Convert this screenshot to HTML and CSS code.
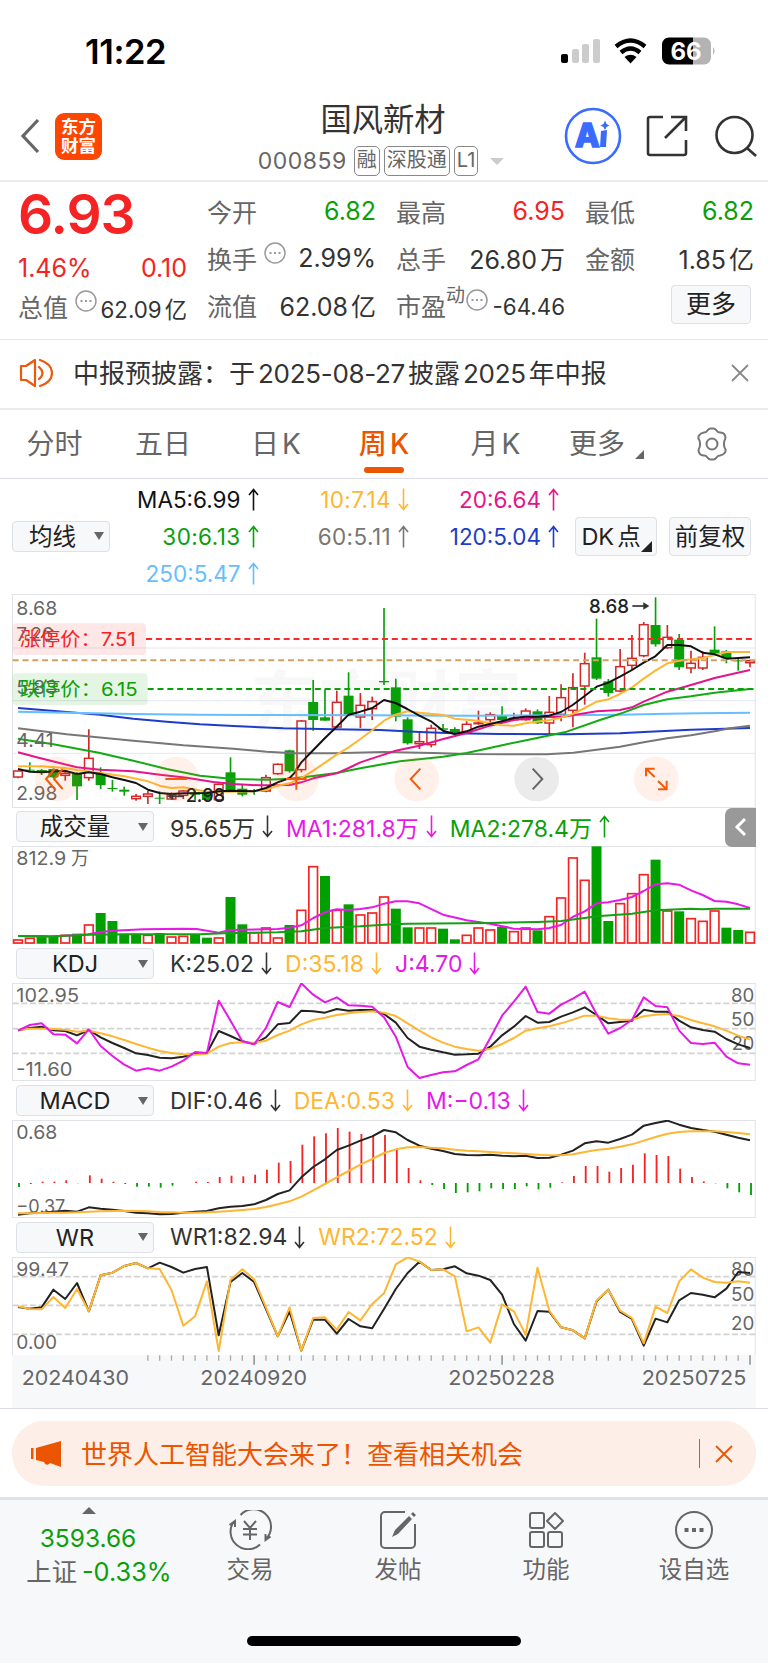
FILE: index.html
```html
<!DOCTYPE html>
<html lang="zh-CN">
<head>
    <meta charset="UTF-8">
    <meta name="viewport" content="width=device-width, initial-scale=1.0">
    <title>国风新材 000859</title>
    <link rel="stylesheet" href="styles.css">
</head>
<body>
    <svg class="defs">
        <symbol id="up" viewBox="0 0 11 23"><path d="M5.500 22.500V1.500M1 7l4.500-5.500L10 7"/></symbol>
        <symbol id="down" viewBox="0 0 11 23"><path d="M5.500 .5v21M1 16l4.500 5.500L10 16"/></symbol>
        <symbol id="dots" viewBox="0 0 22 22"><circle cx="11" cy="11" r="10"/><path d="M5.500 11h2M10 11h2M14.500 11h2" stroke-width="2"/></symbol>
    </svg>

    <div class="status">
        <span class="time">11:22</span>
        <svg class="status-icons" width="156" height="30" viewBox="0 0 156 30">
            <rect x="1" y="17" width="7" height="9" rx="2"/>
            <g fill="#ccc">
                <rect x="12" y="12" width="7" height="14" rx="2"/>
                <rect x="22" y="7" width="7" height="19" rx="2"/>
                <rect x="33" y="2" width="7" height="24" rx="2"/>
            </g>
            <g fill="none" stroke="#000" stroke-width="4.400">
                <path d="M56 9.500q14.500-12 29 0"/>
                <path d="M61 15.500q9.500-8 19 0"/>
            </g>
            <path d="M64.500 20q6-4.500 12 0l-6 6.500z"/>
            <path d="M109 .5h24v27h-24a7 7 0 0 1-7-7v-13a7 7 0 0 1 7-7z"/>
            <path fill="#b3b3b3" d="M133 .5h11a7 7 0 0 1 7 7v13a7 7 0 0 1-7 7h-11zM153 10q3 4 0 8z"/>
            <text x="126" y="22.500" class="battery">66</text>
        </svg>
    </div>

    <header class="header">
        <div class="header-left">
            <svg width="22" height="36" viewBox="0 0 22 36"><path d="M19 2L4 18l15 16" fill="none" stroke="#666" stroke-width="3.200"/></svg>
            <div class="logo">东方<br>财富</div>
        </div>
        <div class="title">
            <h1>国风新材</h1>
            <div class="code">000859<span class="tag">融</span><span class="tag">深股通</span><span class="tag">L1</span><i class="caret"></i></div>
        </div>
        <div class="header-right">
            <svg width="58" height="58" viewBox="0 0 58 58">
                <circle cx="29" cy="29" r="27" fill="none" stroke="#3a6bff" stroke-width="2.600"/>
                <text x="11" y="40" class="ai">A</text>
                <path d="M37 24l6-1-1 17h-6zM41 13.500l1.500 3.500 3 1.500-3 1.500-1.500 3-1.500-3-3-1.500 3-1.500z" fill="#3a6bff"/>
            </svg>
            <svg width="42" height="42" viewBox="0 0 42 42" fill="none" stroke="#333" stroke-width="2.600">
                <path d="M17 2H4a2 2 0 0 0-2 2v34a2 2 0 0 0 2 2h34a2 2 0 0 0 2-2V25M25 2h15v14M39 3L19 23"/>
            </svg>
            <svg width="42" height="44" viewBox="0 0 42 44" fill="none" stroke="#333" stroke-width="2.600">
                <circle cx="19.500" cy="21" r="18"/><path d="M32 34l9 8"/>
            </svg>
        </div>
    </header>

    <section class="quote">
        <div class="price-col">
            <div class="price red">6.93</div>
            <div class="row"><span class="red">1.46%</span><span class="red">0.10</span></div>
            <div class="row small"><label>总值<svg class="dots"><use href="#dots"/></svg></label><span>62.09<em>亿</em></span></div>
        </div>
        <div class="col">
            <div class="row"><label>今开</label><span class="green">6.82</span></div>
            <div class="row"><label>换手<svg class="dots"><use href="#dots"/></svg></label><span>2.99%</span></div>
            <div class="row"><label>流值</label><span>62.08<em>亿</em></span></div>
        </div>
        <div class="col">
            <div class="row"><label>最高</label><span class="red">6.95</span></div>
            <div class="row"><label>总手</label><span>26.80<em>万</em></span></div>
            <div class="row small"><label>市盈<sup>动</sup><svg class="dots tight"><use href="#dots"/></svg></label><span>-64.46</span></div>
        </div>
        <div class="col">
            <div class="row"><label>最低</label><span class="green">6.82</span></div>
            <div class="row"><label>金额</label><span>1.85<em>亿</em></span></div>
            <div class="row end"><button class="btn more">更多</button></div>
        </div>
    </section>

    <section class="notice">
        <svg width="34" height="30" viewBox="0 0 34 30" fill="none" stroke="#eb5a0a" stroke-width="2.200">
            <path d="M2 8v14h5l9 6V2L7 8z" stroke-linejoin="round"/><path d="M20 9q7 6 0 12M21 2q12 4 12 13t-12 13" stroke-linecap="round"/>
        </svg>
        <p>中报预披露：于<b>2025-08-27</b>披露<b>2025</b>年中报</p>
        <svg width="18" height="18" viewBox="0 0 18 18"><path d="M1 1l16 16M17 1L1 17" stroke="#888" stroke-width="1.800"/></svg>
    </section>

    <nav class="tabs">
        <span>分时</span>
        <span>五日</span>
        <span>日<b>K</b></span>
        <span class="active">周<b>K</b></span>
        <span>月<b>K</b></span>
        <span class="tab-more">更多<i class="corner"></i></span>
        <span><svg width="34" height="34" viewBox="0 0 34 34" fill="none" stroke="#777" stroke-width="2">
            <path d="M12 4q2-3 4-2.500h2Q20 1 22 4q1 1.500 3 1.500 4 0 5 3t-.5 5q-1 3.500 0 7 2 2.500.5 5t-5 3q-2 0-3 1.500-2 3-4 2.500h-2q-2 .5-4-2.500-1-1.500-3-1.500-4 0-5-3t.5-5q1-3.500 0-7-2-2.500-.5-5t5-3q2 0 3-1.500z"/><circle cx="17" cy="17" r="5.500"/></svg></span>
    </nav>

    <section class="ma">
        <button class="btn select">均线<i class="caret dark"></i></button>
        <div class="ma-grid">
            <span class="c-ma5">MA5:6.99<svg class="arrow"><use href="#up"/></svg></span>
            <span class="c-yellow wide">10:7.14<svg class="arrow"><use href="#down"/></svg></span>
            <span class="c-pink">20:6.64<svg class="arrow"><use href="#up"/></svg></span>
            <span class="green wide">30:6.13<svg class="arrow"><use href="#up"/></svg></span>
            <span class="c-gray wide">60:5.11<svg class="arrow"><use href="#up"/></svg></span>
            <span class="c-blue">120:5.04<svg class="arrow"><use href="#up"/></svg></span>
            <span class="c-sky">250:5.47<svg class="arrow"><use href="#up"/></svg></span>
        </div>
        <button class="btn dk">DK<em>点</em><i class="corner"></i></button>
        <button class="btn">前复权</button>
    </section>

    <section class="charts">
        <svg id="kline" width="744" height="214" viewBox="36 10 2232 642"></svg>

        <div class="legend">
            <button class="btn select">成交量<i class="caret dark"></i></button>
            <span>95.65万<svg class="arrow"><use href="#down"/></svg></span>
            <span class="c-magenta">MA1:281.8万<svg class="arrow"><use href="#down"/></svg></span>
            <span class="green">MA2:278.4万<svg class="arrow"><use href="#up"/></svg></span>
            <div class="drawer"><svg width="14" height="20" viewBox="0 0 14 20"><path d="M11 2L3 10l8 8" fill="none" stroke="#fff" stroke-width="3"/></svg></div>
        </div>
        <svg id="volume" width="744" height="98" viewBox="36 137 2232 294"></svg>

        <div class="legend">
            <button class="btn select">KDJ<i class="caret dark"></i></button>
            <span>K:25.02<svg class="arrow"><use href="#down"/></svg></span>
            <span class="c-yellow">D:35.18<svg class="arrow"><use href="#down"/></svg></span>
            <span class="c-magenta">J:4.70<svg class="arrow"><use href="#down"/></svg></span>
        </div>
        <svg id="kdj" width="744" height="98" viewBox="36 547 2232 294"></svg>

        <div class="legend">
            <button class="btn select">MACD<i class="caret dark"></i></button>
            <span>DIF:0.46<svg class="arrow"><use href="#down"/></svg></span>
            <span class="c-yellow">DEA:0.53<svg class="arrow"><use href="#down"/></svg></span>
            <span class="c-magenta">M:−0.13<svg class="arrow"><use href="#down"/></svg></span>
        </div>
        <svg id="macd" width="744" height="98" viewBox="36 118 2232 294"></svg>

        <div class="legend">
            <button class="btn select">WR<i class="caret dark"></i></button>
            <span>WR1:82.94<svg class="arrow"><use href="#down"/></svg></span>
            <span class="c-yellow">WR2:72.52<svg class="arrow"><use href="#down"/></svg></span>
        </div>
        <svg id="wr" width="744" height="98" viewBox="36 529 2232 294"></svg>
        <svg id="axis" width="744" height="53.400" viewBox="36 822 2232 160"></svg>
    </section>

    <section class="promo">
        <div class="banner">
            <svg width="32" height="28" viewBox="0 0 32 28" fill="#eb5500"><path d="M0 8h2.500v11H0zM5 8L30 1v26l-11-4q-2 3-5 1l-1-2-8-2z"/></svg>
            <p>世界人工智能大会来了！查看相关机会</p>
            <i class="divider"></i>
            <svg width="18" height="18" viewBox="0 0 18 18"><path d="M1 1l16 16M17 1L1 17" stroke="#eb5500" stroke-width="1.800"/></svg>
        </div>
    </section>

    <footer class="footer">
        <div class="index">
            <i class="tri"></i>
            <div class="green">3593.66</div>
            <div class="change">上证<span class="green">-0.33%</span></div>
        </div>
        <a><svg width="44" height="40" viewBox="0 0 44 40">
            <path d="M12.500 5A17.500 17.500 0 0 1 38.500 28.500M42.500 26.500l-5 3.500v-6M32 34.500A17.500 17.500 0 0 1 5.500 12M1.500 15L7 11v6M16 11l6 7 6-7M22 18v12M15 19h14M15 24.500h14"/></svg>交易</a>
        <a><svg width="40" height="40" viewBox="0 0 40 40">
            <path d="M27 2H7a4 4 0 0 0-4 4v28a4 4 0 0 0 4 4h26a4 4 0 0 0 4-4V14"/><path d="M14 27l3-7L31 6l3 3-14 15zM33 4l2-2 3 3-2 2z" fill="#666" stroke="none"/></svg>发帖</a>
        <a><svg width="40" height="40" viewBox="0 0 40 40">
            <rect x="4" y="3" width="14" height="15" rx="2"/><rect x="4" y="22" width="14" height="15" rx="2"/><rect x="22" y="22" width="14" height="15" rx="2"/><path d="M29 3l8 8-8 8-8-8z" stroke-linejoin="round"/></svg>功能</a>
        <a><svg width="40" height="40" viewBox="0 0 40 40">
            <circle cx="20" cy="20" r="18"/><path d="M10.500 20h4M18 20h4M25.500 20h4" stroke-width="4"/></svg>设自选</a>
        <div class="home-bar"></div>
    </footer>

    <script src="charts.js"></script>
</body>
</html>
```
FILE: styles.css
```css
* {
    box-sizing: border-box;
}
body {
    margin: 0;
    width: 768px;
    height: 1663px;
    overflow: hidden;
    background: #fff;
    color: #333;
    font-family: Inter, "Noto Sans CJK SC", sans-serif;
    font-size: 25px;
}
p, h1 {
    margin: 0;
    font-weight: 400;
}
b {
    font-weight: 400;
}
em, i {
    font-style: normal;
}
svg {
    display: block;
    flex: none;
}
.defs {
    display: none;
}
.red { color: #f52323; }
.green { color: #0aa00a; }
.c-ma5 { color: #111; }
.c-yellow { color: #ffb632; }
.c-pink { color: #e6148c; }
.c-gray { color: #777; }
.c-blue { color: #1e3cc8; }
.c-sky { color: #64beff; }
.c-magenta { color: #e619e6; }

.status {
    height: 100px;
    padding: 0 52px 0 85px;
    display: flex;
    justify-content: space-between;
}
.time {
    margin-top: 31px;
    line-height: 42px;
    font-size: 34.500px;
    font-weight: 600;
    color: #000;
    letter-spacing: -0.4px;
}
.status-icons {
    margin-top: 37px;
}
.battery {
    fill: #fff;
    font-size: 24px;
    font-weight: 700;
    text-anchor: middle;
}

.header {
    height: 82px;
    border-bottom: 2px solid #ebebeb;
    display: grid;
    grid-template-columns: 240px 1fr 204px;
}
.header-left {
    display: flex;
    align-items: center;
    padding: 0 0 11px 19px;
    gap: 14px;
}
.logo {
    width: 47px;
    height: 47px;
    border-radius: 9px;
    background: #ff4600;
    color: #fff;
    font-size: 17.500px;
    font-weight: 700;
    line-height: 19.500px;
    text-align: center;
    padding-top: 4px;
}
.title {
    padding-top: 1px;
    margin-left: -38px;
    text-align: center;
}
.title h1 {
    font-size: 31.300px;
    line-height: 38px;
}
.code {
    display: flex;
    align-items: center;
    justify-content: center;
    height: 44px;
    color: #666;
    font-size: 23px;
    letter-spacing: 0.5px;
    margin-left: -4px;
}
.tag {
    height: 30px;
    border: 1.500px solid #888;
    border-radius: 5px;
    font-size: 20px;
    line-height: 27px;
    padding: 0 2px;
    margin-left: 4px;
    letter-spacing: 0;
}
.tag:first-child {
    margin-left: 7px;
}
.caret {
    border: 7px solid transparent;
    border-top-color: #ccc;
    border-bottom: 0;
    margin-left: 12px;
}
.caret.dark {
    border-width: 8px 5px 0;
    border-top-color: #666;
    margin: 0;
}
.header-right {
    display: flex;
    align-items: center;
    gap: 24px;
    padding-bottom: 11px;
}
.header-right svg:last-child {
    margin-left: 3px;
}
.ai {
    fill: #3a6bff;
    stroke: #3a6bff;
    stroke-width: 1.500px;
    font-size: 32px;
    font-weight: 800;
}

.quote {
    height: 158px;
    border-bottom: 1px solid #e6e6e6;
    padding: 5px 13px 0 18px;
    display: grid;
    grid-template-columns: repeat(4, 169px);
    column-gap: 20px;
}
.row {
    height: 47px;
    display: flex;
    align-items: center;
    justify-content: space-between;
    white-space: nowrap;
}
.row em {
    margin-left: 3px;
}
.row label {
    display: flex;
    align-items: center;
    color: #666;
}
.row.small span {
    font-size: 22.300px;
    padding-top: 4px;
}
.row.end {
    justify-content: flex-end;
    padding-right: 3px;
}
.dots {
    width: 22px;
    height: 22px;
    fill: none;
    stroke: #999;
    stroke-width: 1.500px;
    margin: -10px 0 0 7px;
}
.dots.tight {
    margin-left: 1px;
}
sup {
    font-size: 19px;
    line-height: 20px;
    margin-top: -18px;
}
.price {
    height: 55px;
    line-height: 55px;
    font-size: 55px;
    font-weight: 600;
    letter-spacing: -1px;
}
.price-col .row:nth-child(2) {
    height: 46px;
    padding-top: 5px;
}
.price-col .row:nth-child(3) {
    height: 36px;
}
.btn {
    height: 39px;
    padding: 0;
    border: 1.500px solid #dde0e6;
    border-radius: 4px;
    background: #f7f8fa;
    color: #222;
    font-family: inherit;
    font-size: 23.500px;
    line-height: 1;
    position: relative;
}
.btn.more {
    width: 80px;
    font-size: 25px;
}

.notice {
    height: 70px;
    border-bottom: 2px solid #ebebeb;
    display: flex;
    align-items: center;
    padding: 0 19px 3px 19px;
}
.notice p {
    flex: 1;
    margin-left: 20px;
    font-size: 26px;
    padding-bottom: 2px;
}
.notice b {
    letter-spacing: -0.3px;
    margin: 0 3px;
}

.tabs {
    height: 69px;
    border-bottom: 1.500px solid #dcdce6;
    display: grid;
    grid-template-columns: 109px 108px 118px 98px 125px 98px 112px;
    align-items: center;
    justify-items: center;
    color: #666;
    font-size: 28px;
}
.tabs span {
    height: 67px;
    line-height: 66px;
    display: flex;
    align-items: center;
    position: relative;
}
.tabs b {
    margin-left: 3px;
}
.tabs .active {
    color: #eb5500;
    font-weight: 500;
}
.tabs .active b {
    font-weight: 500;
}
.tabs .active::after {
    content: "";
    position: absolute;
    left: 50%;
    bottom: 5px;
    width: 40px;
    height: 6px;
    margin-left: -20px;
    border-radius: 3px;
    background: #eb5500;
}
.corner {
    border-left: 9px solid transparent;
    border-bottom: 9px solid #666;
}
.tab-more {
    margin-right: 20px;
}
.tab-more .corner {
    position: absolute;
    right: -19px;
    bottom: 19px;
}

.ma {
    height: 114.600px;
    display: flex;
    align-items: center;
    padding: 0 16px 0 12px;
    white-space: nowrap;
}
.select {
    height: 31px;
    width: 98px;
    display: flex;
    align-items: center;
    justify-content: space-between;
    padding: 0 5px 0 16px;
}
.ma-grid {
    width: 449px;
    margin-right: 16px;
    display: grid;
    grid-template-columns: 148.500px 150.500px 150px;
    grid-auto-rows: 37px;
    align-items: center;
    justify-items: end;
    font-size: 22.500px;
}
.ma-grid span, .legend span {
    display: flex;
    align-items: center;
    gap: 7px;
}
.ma-grid .wide {
    letter-spacing: 0.4px;
}
.arrow {
    width: 11px;
    height: 23px;
    fill: none;
    stroke: currentColor;
    stroke-width: 1.600px;
}
.btn.dk {
    width: 82px;
    margin-right: 12px;
    padding-right: 10px;
}
.dk em {
    margin-left: 3px;
}
.dk .corner {
    position: absolute;
    right: 4px;
    bottom: 3px;
    border-width: 11px;
    border-bottom-color: #222;
    border-right: 0;
    border-top: 0;
}
.dk + .btn {
    width: 82px;
}

.charts {
    padding: 0 12px;
    border-bottom: 1.500px solid #dcdce6;
}
.legend {
    height: 38.800px;
    display: flex;
    align-items: center;
    gap: 14px;
    padding-left: 4px;
    font-size: 23px;
    white-space: nowrap;
    position: relative;
}
.legend span + span {
    margin-left: -1px;
}
.legend .select {
    width: 138px;
    justify-content: center;
    font-size: 23.500px;
    padding: 0 20px 0 0;
    margin-right: 2px;
}
.legend .caret {
    position: absolute;
    right: 5px;
}
.drawer {
    position: absolute;
    right: 0;
    top: 0;
    width: 31px;
    height: 39px;
    border-radius: 7px 0 0 7px;
    background: #999;
    display: flex;
    align-items: center;
    justify-content: center;
}
.charts text {
    font-size: 57px;
    fill: #666;
}

.promo {
    height: 88px;
    padding: 12px 12px 0;
}
.banner {
    height: 65px;
    border-radius: 32px;
    background: #fdeee7;
    color: #eb5500;
    display: flex;
    align-items: center;
    padding: 0 23px 0 19px;
}
.banner p {
    flex: 1;
    margin-left: 18px;
    font-size: 26px;
    padding-bottom: 2px;
}
.divider {
    width: 1.500px;
    height: 29px;
    background: #eb5500;
    margin-right: 15px;
}

.footer {
    height: 166px;
    border-top: 3px solid #e1e2e5;
    background: #f7f8fa;
    display: grid;
    grid-template-columns: 176px repeat(4, 148px);
    color: #666;
    position: relative;
}
.footer a {
    display: flex;
    flex-direction: column;
    align-items: center;
    padding-top: 10px;
    font-size: 23.500px;
    line-height: 39px;
}
.footer a svg {
    fill: none;
    stroke: #666;
    stroke-width: 2px;
}
.index {
    text-align: center;
    line-height: 34px;
    padding: 7px 0 0 22px;
    font-size: 24.500px;
}
.index > .green {
    margin-left: -22px;
}
.index .change {
    font-size: 25.300px;
}
.index span {
    margin-left: 5px;
}
.tri {
    display: block;
    width: 0;
    margin: 0 0 7px 60px;
    border: 7px solid transparent;
    border-bottom-color: #666;
    border-top: 0;
}
.home-bar {
    position: absolute;
    left: 247px;
    bottom: 17px;
    width: 274px;
    height: 10px;
    border-radius: 5px;
    background: #000;
}
```
FILE: charts.js
```js
const RED = '#f52323', GREEN = '#0aa00a', DARK = '#222', YELLOW = '#ffb632', MAGENTA = '#e619e6', PINK = '#e6148c';
const x = i => 54 + i * 35.42;

// colour, body top, body bottom, high, low
const candles = [
    'r 540 560 540 563', 'g 537 540 515 542', 'g 538 545 535 553', 'g 535 560 533 562', 'r 547 555 540 570',
    'g 548 587 545 628', 'r 502 562 416 570', 'g 550 583 530 595', 'g 592 595 568 603', 'g 597 603 588 615',
    'r 616 625 610 630', 'r 609 618 600 640', 'g 621 624 602 640', 'r 612 626 605 628', 'r 600 615 598 625',
    'g 605 612 600 628', 'g 605 628 603 629', 'r 580 628 578 630', 'g 545 600 500 602', 'g 594 612 583 617',
    'g 600 603 595 612', 'r 560 602 552 605', 'r 520 550 518 552', 'g 479 542 477 546', 'r 390 538 388 545',
    'g 334 388 268 420', 'g 380 390 296 390', 'r 334 410 300 412', 'g 315 372 245 375', 'r 343 380 307 412',
    'r 332 355 318 388', 'g 271 275 52 283', 'g 290 378 264 392', 'g 386 458 380 462', 'r 452 460 427 475',
    'r 412 463 402 470', 'g 413 417 400 418', 'g 415 425 410 430', 'r 400 425 392 427', 'r 396 400 360 402',
    'r 371 388 365 395', 'g 375 388 347 390', 'r 382 388 366 390', 'r 360 388 353 390', 'g 362 398 356 400',
    'r 364 398 316 430', 'r 320 372 281 392', 'r 290 360 248 410', 'r 218 287 186 342', 'g 200 264 84 268',
    'g 272 307 265 318', 'r 227 302 175 305', 'r 202 225 133 238', 'r 101 196 94 200', 'g 103 161 20 168',
    'r 139 172 103 175', 'g 147 230 130 238', 'r 217 233 180 248', 'r 199 233 182 238', 'g 177 189 107 192',
    'g 182 203 178 218', 'g 209 212 205 240', 'r 209 217 207 230'
].map(s => s.split(' '));

const volume = [417,412,405,410,403,400,372,338,362,400,400,403,398,408,406,402,412,411,290,372,395,381,411,374,328,197,227,328,312,342,336,288,325,381,381,381,385,417,403,381,387,380,392,381,390,347,291,171,238,138,362,308,278,221,178,330,333,353,361,330,382,389,394];
const volumeRed = [0,1,4,6,11,13,14,17,20,21,22,24,25,27,29,30,31,34,35,38,39,40,42,43,45,46,47,48,51,52,53,55,57,58,59,62];

const K = [689,682,678,689,691,704,688,710,727,742,758,763,771,773,768,758,757,691,706,722,730,710,671,667,630,632,636,625,630,628,628,640,666,712,738,747,755,762,761,759,738,704,678,646,666,664,648,635,620,643,668,664,660,627,633,633,660,680,688,693,715,731,742];
const D = [688,684,684,685,687,693,690,698,707,718,730,741,751,757,761,762,759,738,727,725,726,720,703,690,671,658,651,643,638,634,632,636,646,668,690,710,726,738,745,750,744,730,712,690,683,677,668,657,645,645,653,657,657,647,642,640,646,658,668,677,690,705,717];
const J = [690,673,668,701,702,728,686,736,766,792,810,803,810,798,780,754,757,600,660,722,731,682,604,619,548,582,605,590,614,615,618,650,708,799,832,823,815,812,793,776,712,645,603,558,634,639,612,594,573,640,699,682,658,590,616,620,690,727,730,726,768,788,792];

const bars = [319,310,303,303,299,308,284,294,303,310,318,318,321,315,307,303,304,289,285,287,282,267,246,241,192,167,158,142,153,160,166,163,207,262,299,313,325,337,335,332,323,325,325,317,326,321,305,286,256,256,273,262,252,218,223,226,264,289,302,308,323,335,343];
const DIF = [402,398,396,393,390,393,380,384,387,391,396,398,401,400,396,393,391,383,378,376,371,358,340,329,290,259,236,208,195,180,167,148,155,178,195,204,211,220,223,224,222,225,227,225,232,231,222,210,188,182,186,175,162,135,127,120,132,142,148,153,162,171,179];
const DEA = [398,398,397,396,396,395,393,392,391,390,391,392,394,395,396,396,395,393,391,388,385,379,371,362,348,329,310,290,271,252,235,217,206,200,199,201,203,207,210,212,214,216,218,220,222,224,224,221,214,208,204,198,191,180,169,159,154,152,152,152,154,157,161];

const WR1 = [679,684,680,627,655,607,692,584,576,556,547,563,546,559,576,565,559,764,604,577,604,685,767,692,810,717,717,759,715,737,743,685,625,577,543,568,566,557,578,585,598,642,730,780,691,693,740,749,773,662,627,694,715,795,714,725,659,637,642,650,624,574,577];
const WR2 = [677,685,686,649,682,625,692,584,576,556,547,563,565,628,735,707,602,811,597,566,596,680,767,680,810,712,710,747,694,719,670,638,551,530,543,568,566,587,752,740,786,671,692,762,561,690,740,749,773,660,627,690,712,788,678,697,602,566,591,604,606,602,606];

// helpers
const poly = (pts, c, w = 5) => `<polyline points="${pts}" fill="none" stroke="${c}" stroke-width="${w}" stroke-linejoin="round"/>`;
const series = (arr, c, w) => poly(arr.map((v, i) => x(i) + ',' + v).join(' '), c, w);
const hline = (y, c, x1 = 38, dash = '', w = 3) => `<path d="M${x1} ${y}H2266" stroke="${c}" stroke-width="${w}" stroke-dasharray="${dash}"/>`;
const frame = (y, h) => `<rect x="37.5" y="${y + 1.5}" width="2228" height="${h - 3}" fill="none" stroke="#e1e3e8" stroke-width="3"/>`;
const label = (tx, y, s, w, extra = '') => `<text x="${tx - 1}" y="${y}" textLength="${w}" lengthAdjust="spacingAndGlyphs" ${extra}>${s}</text>`;
const draw = (id, parts) => document.getElementById(id).innerHTML = parts.join('');

function candle(c, i) {
    const [type, top, bottom, high, low] = [c[0], +c[1], +c[2], +c[3], +c[4]];
    const col = type === 'r' ? '#d22828' : GREEN;
    const body = type === 'r'
        ? `<rect x="${x(i) - 13}" y="${top + 1}" width="26" height="${Math.max(bottom - top - 2, 2)}" fill="#fff" stroke="${col}" stroke-width="4.5"/>`
        : `<rect x="${x(i) - 15}" y="${top}" width="30" height="${bottom - top}" fill="${col}"/>`;
    return `<path d="M${x(i)} ${high}V${low}" stroke="${col}" stroke-width="5"/>` + body;
}

function circle(cx, icon, gray) {
    return `<circle cx="${cx}" cy="565" r="67" fill="${gray ? 'rgba(0,0,0,.08)' : 'rgba(255,110,40,.1)'}"/>
        <path d="${icon}" fill="none" stroke="${gray ? '#666' : '#f55a0a'}" stroke-width="6"/>`;
}

draw('kline', [
    '<text x="750" y="408" style="font-size:204px;font-weight:700;fill:#f8f8f9">东方财富</text>',
    frame(10, 642),
    hline(172, '#e6e8f0'), hline(330, '#e6e8f0'), hline(488, '#e6e8f0'),
    candles.map(candle).join(''),
    poly('54,352 200,364 300,372 400,384 500,393 600,401 700,406 850,413 1000,416 1140,418 1260,424 1360,428 1500,430 1700,431 1860,428 1931,424 2073,417 2250,412', '#1e3cc8', 6),
    poly('54,363 200,366 400,370 600,372 800,373 1100,374 1400,375 1700,374 1860,372 2000,369 2100,368 2250,366', '#64beff', 6),
    poly('54,413 200,431 400,450 550,464 700,474 800,483 880,488 1000,488 1152,484 1300,487 1400,490 1640,491 1720,486 1790,477 1860,468 1931,455 2002,443 2073,434 2144,422 2190,413 2250,405', '#777', 6),
    poly('54,444 160,461 300,487 400,510 500,535 600,555 700,565 800,567 869,564 940,556 1010,547 1081,533 1152,520 1200,512 1329,498 1400,487 1500,465 1600,444 1700,423 1800,388 1870,366 1931,343 2002,326 2073,317 2144,306 2250,295', '#14aa14', 6),
    poly('54,485 110,500 170,515 231,530 300,537 400,542 480,552 560,561 640,574 700,580 780,584 869,583 904,575 940,563 1010,548 1046,532 1081,515 1117,503 1152,492 1187,480 1258,465 1330,445 1400,427 1470,405 1541,388 1612,380 1690,378 1754,368 1790,362 1860,358 1896,350 1931,333 2002,303 2073,283 2144,262 2200,249 2250,238', PINK, 6),
    poly('54,527 125,527 195,532 231,538 302,547 373,557 444,572 479,585 514,592 550,590 621,603 691,603 762,602 798,598 833,585 869,578 904,562 940,540 975,516 1010,492 1046,470 1081,445 1117,418 1152,390 1187,372 1222,362 1258,366 1330,373 1364,384 1435,390 1470,398 1506,404 1541,405 1577,398 1648,388 1683,381 1718,370 1754,352 1790,333 1825,326 1860,310 1896,290 1931,264 1966,240 2002,218 2037,210 2108,202 2144,193 2180,184 2250,184', YELLOW, 6),
    poly('54,535 90,543 125,545 195,540 231,550 266,545 302,550 337,560 373,568 408,577 444,597 479,607 514,610 550,608 621,607 656,602 691,600 762,602 798,592 833,575 869,562 885,545 904,515 940,478 975,442 1010,408 1046,372 1081,363 1117,352 1152,328 1187,337 1222,355 1258,375 1293,392 1329,420 1364,430 1400,422 1435,408 1470,400 1506,392 1541,382 1577,378 1612,378 1648,375 1683,364 1718,343 1754,316 1790,288 1825,276 1860,258 1896,238 1931,216 1966,197 2002,163 2037,163 2073,167 2108,186 2144,191 2180,204 2250,200', '#111', 6),
    label(50, 73, '8.68', 123), label(50, 151, '7.26', 112), label(50, 310, '5.83', 123), label(50, 470, '4.41', 112), label(50, 629, '2.98', 123),
    '<rect x="38" y="98" width="400" height="95" rx="12" fill="rgba(245,35,35,.11)"/>',
    '<rect x="38" y="248" width="405" height="95" rx="12" fill="rgba(10,160,10,.11)"/>',
    label(60, 167, '涨停价：7.51', 348, `style="fill:${RED}"`),
    label(60, 317, '跌停价：6.15', 354, `style="fill:${GREEN}"`),
    hline(145, '#ff2828', 438, '18 11.5', 6),
    hline(209, '#d2a064', 38, '18 11.5', 6),
    hline(295, '#0aa00a', 443, '18 11.5', 6),
    label(1768, 66, '8.68', 120, 'style="fill:#222;font-weight:500"'),
    '<path d="M1897 46h42" stroke="#333" stroke-width="5"/><path d="M1930 35l18 11-18 11z" fill="#333"/>',
    label(558, 634, '2.98', 118, 'style="fill:#222;font-weight:500"'),
    '<path d="M512 617h40" stroke="#333" stroke-width="5"/><path d="M520 606l-18 11 18 11z" fill="#333"/>',
    circle(172, 'M164 535l-26 30 26 30M188 535l-26 30 26 30'),
    circle(530, 'M496 565h66'),
    circle(890, 'M858 565h62M889 533v64'),
    circle(1250, 'M1261 534l-29 31 29 31'),
    circle(1610, 'M1598 534l29 31-29 31', true),
    circle(1969, 'M1938 557v-23h26M1939 535l25 24M2000 570v26h-26M1999 595l-25-24')
]);

draw('volume', [
    frame(137, 294),
    volume.map((v, i) => volumeRed.includes(i)
        ? `<rect x="${x(i) - 13}" y="${v + 2}" width="26" height="${Math.max(426 - v, 3)}" fill="#fff" stroke="${RED}" stroke-width="5"/>`
        : `<rect x="${x(i) - 15}" y="${v}" width="30" height="${430 - v}" fill="#00a000"/>`).join(''),
    poly('54,407 150,409 266,402 302,395 340,391 430,387 550,385 590,386 656,397 691,389 833,386 869,382 904,375 940,353 975,336 1010,327 1046,329 1081,326 1117,321 1152,310 1187,303 1222,303 1258,309 1329,343 1400,360 1470,370 1541,385 1612,387 1648,383 1683,374 1718,350 1754,333 1790,309 1825,306 1860,299 1896,290 1931,272 1966,252 2002,249 2037,253 2073,270 2108,284 2144,302 2180,304 2215,312 2250,323', MAGENTA, 6),
    poly('54,407 160,408 266,403 400,402 600,402 691,398 833,396 904,393 975,383 1081,378 1152,373 1222,370 1470,368 1612,365 1683,362 1754,353 1790,348 1896,340 1966,330 2073,325 2108,327 2144,325 2250,325', '#14a014', 6),
    label(50, 195, '812.9', 150), label(214, 195, '万', 54)
]);

const levels = ys => ys.map(y => hline(y, '#d2d2d2', 38, '18 8', 5)).join('');

draw('kdj', [
    frame(547, 294), levels([608, 684, 758]),
    label(50, 605, '102.95', 188), label(50, 825, '-11.60', 168),
    label(2194, 605, '80', 70), label(2194, 676, '50', 70), label(2196, 747, '20', 68),
    series(K, DARK, 6), series(D, YELLOW, 6), series(J, MAGENTA, 6)
]);

draw('macd', [
    frame(118, 294),
    label(50, 176, '0.68', 123), label(50, 396, '−0.37', 147),
    bars.map((v, i) => `<path d="M${x(i) + 3} 307V${v}" stroke="${v < 307 ? RED : '#00a000'}" stroke-width="5.500"/>`).join(''),
    series(DIF, DARK, 6), series(DEA, YELLOW, 6)
]);

draw('wr', [
    '<path d="M37.5 823V530.500H2265.500V823" fill="none" stroke="#e1e3e8" stroke-width="3"/>', levels([588, 674, 761]),
    label(50, 586, '99.47', 158), label(50, 806, '0.00', 122),
    label(2194, 586, '80', 70), label(2194, 661, '50', 70), label(2194, 748, '20', 70),
    series(WR1, DARK, 6), series(WR2, YELLOW, 6)
]);

let ticks = '';
for (let i = 11; i < 63; i++) {
    const major = i === 20 || i === 41 || i === 62;
    ticks += `<path d="M${x(i)} 823v${major ? 28 : 16}" stroke="${major ? '#999' : '#aaa'}" stroke-width="${major ? 5 : 4}"/>`;
}
const date = (tx, s, w) => label(tx, 913, s, w, 'style="font-size:62px"');
draw('axis', [
    '<rect x="36" y="822" width="2232" height="162" fill="#f7f8fa"/>', ticks,
    date(66, '20240430', 322), date(602, '20240920', 320), date(1346, '20250228', 320), date(1926, '20250725', 314)
]);
```
